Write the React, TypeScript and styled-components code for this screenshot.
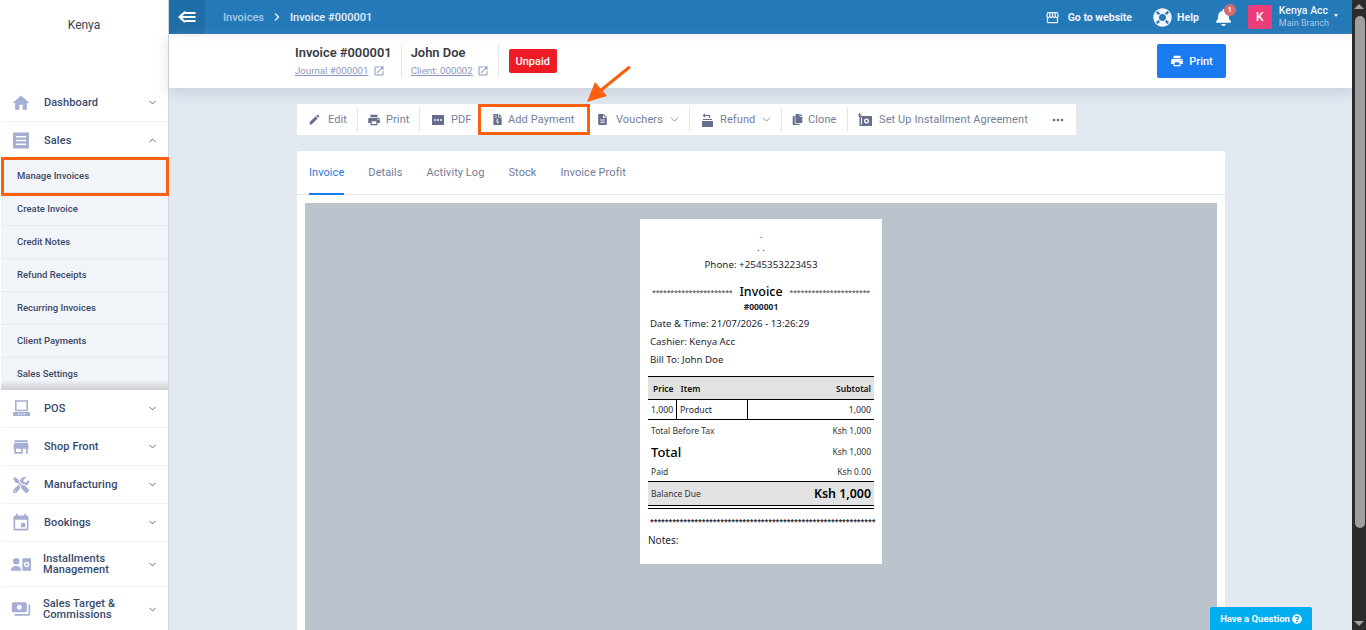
import React from "react";
import styled, { createGlobalStyle } from "styled-components";
import { ChevronDown, ChevronUp, ChevronRight } from "lucide-react";
import {
  MdHome, MdEdit, MdPrint, MdDescription, MdMoreHoriz, MdOpenInNew, MdStorefront, MdStore, MdEvent, MdPayments,
} from "react-icons/md";
import { FaLifeRing, FaQuestionCircle, FaCopy, FaFileInvoiceDollar, FaTools, FaBell } from "react-icons/fa";

const Global = createGlobalStyle`
  html, body { margin: 0; padding: 0; height: 630px; overflow: hidden; background: #e3e9f1; }
  * { box-sizing: border-box; }
  body { font-family: Roboto, "Liberation Sans", sans-serif; }
`;

const Page = styled.div`position: relative; display: flex; width: 1366px; height: 630px; overflow: hidden;`;
const Viewport = styled.div`display: flex; width: 1352px; height: 630px; overflow: hidden;`;
const ScrollTrack = styled.div`width: 14px; height: 630px; background: #2b2b2b; display: flex; flex-direction: column; align-items: center;`;
const ScrollUp = styled.div`width: 0; height: 0; margin-top: 4px; border-left: 5px solid transparent; border-right: 5px solid transparent; border-bottom: 5px solid #a3a3a3;`;
const ScrollThumb = styled.div`width: 10px; height: 512px; margin-top: 7px; margin-left: 2px; background: #9f9f9f; border-radius: 5px;`;
const ScrollDown = styled.div`width: 0; height: 0; margin-top: auto; margin-bottom: 4px; border-left: 5px solid transparent; border-right: 5px solid transparent; border-top: 5px solid #a3a3a3;`;

const Sidebar = styled.aside`width: 169px; flex: none; height: 630px; background: #fff; border-right: 1px solid #d3d5d8; padding-left: 1px; display: flex; flex-direction: column; overflow: hidden;`;
const Brand = styled.div`height: 84px; flex: none; padding-top: 17px; text-align: center; font-size: 12px; line-height: 16px; color: #3a4252; padding-right: 1px;`;
const NavItem = styled.div<{ $h?: number }>`
  height: ${p => p.$h ?? 38}px; flex: none; display: flex; align-items: center; padding: 0 10px 0 10px;
  border-bottom: 1px solid #f0f1f4; color: #374a6d; font-size: 11px; letter-spacing: .1px; font-weight: 500;
`;
const NavIcon = styled.span`width: 20px; height: 20px; flex: none; display: flex; align-items: center; justify-content: center; color: #a6aed4; margin-right: 13px;`;
const NavLabel = styled.span<{ $wide?: boolean }>`flex: 1; line-height: 11px; margin-left: ${p => p.$wide ? "-1px" : "0"};`;
const Chevron = styled.span`display: flex; color: #4f5f80;`;
const SubList = styled.div`height: 230px; flex: none; overflow: hidden; position: relative; background: #f1f4f9;
  &::after { content: ""; position: absolute; left: 0; right: 0; bottom: 0; height: 10px; background: linear-gradient(to bottom, rgba(190,192,196,0), rgba(190,192,196,.75)); }`;
const SubItem = styled.div`height: 33px; padding: 0 0 2px 16px; display: flex; align-items: center; border-bottom: 1px solid #e4e8ef; font-size: 9.5px; font-weight: 500; color: #3c4a66;`;

const Main = styled.main`flex: 1; min-width: 0; height: 630px; display: flex; flex-direction: column; background: #e3e9f1;`;
const TopBar = styled.header`height: 34px; flex: none; background: #2479b9; display: flex; align-items: center; color: #fff; padding-right: 14px;`;
const Toggle = styled.div`width: 36px; height: 34px; background: #206ea8; display: flex; align-items: center; justify-content: center;`;
const Crumb = styled.span<{ $strong?: boolean }>`font-size: 11px; font-weight: 500; color: ${p => p.$strong ? "#e9f0f7" : "#a9c9e3"};`;
const Crumbs = styled.div`display: flex; align-items: center; margin-left: 18px; gap: 7px;`;
const TopRight = styled.div`margin-left: auto; display: flex; align-items: center;`;
const TopLink = styled.span<{ $gap: number; $ml?: number }>`display: flex; align-items: center; gap: ${p => p.$gap}px; margin-left: ${p => p.$ml ?? 0}px; font-size: 10.5px; font-weight: 700; color: #eef4f9;`;
const Bell = styled.span`position: relative; display: flex; margin-left: 16px;`;
const BellBadge = styled.span`position: absolute; top: -5px; right: -4px; width: 12px; height: 12px; border-radius: 50%; background: #d46a72; color: #fff; font-size: 7px; font-weight: 700; display: flex; align-items: center; justify-content: center;`;
const Avatar = styled.span`width: 24px; height: 24px; margin-left: 16px; background: #ec3d7a; border-radius: 2px; display: flex; align-items: center; justify-content: center; color: #fff; font-size: 12px; font-weight: 500;`;
const UserBox = styled.div`margin-left: 7px; display: flex; flex-direction: column; gap: 2px;`;
const UserName = styled.span`font-size: 10.5px; line-height: 11px; font-weight: 500; color: #eef4f9;`;
const UserBranch = styled.span`font-size: 9px; line-height: 11px; color: #a9cbe6;`;
const Caret = styled.span`width: 0; height: 0; margin-left: 5px; margin-bottom: 3px; border-left: 2.5px solid transparent; border-right: 2.5px solid transparent; border-top: 3px solid #fff;`;

const PageHead = styled.div`height: 54px; flex: none; background: #fff; display: flex; align-items: center; padding: 0 126px 0 126px; box-shadow: 0 1px 2px #d4d8de, 0 5px 14px rgba(150,160,180,.35), inset 0 8px 8px -8px rgba(120,120,120,.18); position: relative; `;
const HeadBlock = styled.div<{ $first?: boolean }>`display: flex; flex-direction: column; justify-content: center; height: 34px; padding: 0 9px 1px ${p => p.$first ? 0 : 9}px; border-right: 1px solid #e6e8ec; gap: 5px;`;
const HeadTitle = styled.span`font-size: 12.9px; line-height: 15px; font-weight: 600; color: #373c44; white-space: nowrap;`;
const HeadLink = styled.span`display: flex; align-items: center; gap: 4px; font-size: 9.7px; line-height: 12px; color: #8d96bc; white-space: nowrap; u { text-underline-offset: 1px; }`;
const Unpaid = styled.span`margin-left: 10px; width: 48px; height: 24px; background: #ed1c24; border-radius: 2px; color: #fff; font-size: 11px; font-weight: 500; display: flex; align-items: center; justify-content: center;`;
const PrintButton = styled.button`margin-left: auto; width: 69px; height: 34px; border: 0; border-radius: 2px; background: #1a7aef; color: #fff; font: 500 11px Roboto, sans-serif; display: flex; align-items: center; justify-content: center; gap: 5px; padding: 0;`;

const Content = styled.div`flex: 1; min-height: 0; padding: 16px 0 0 128px; display: flex; flex-direction: column;`;
const Toolbar = styled.div`width: 779px; height: 31px; flex: none; background: #fff; display: flex; align-items: center;`;
const ToolBtn = styled.span<{ $w: number; $pl: number; $gap?: number; $line?: boolean }>`
  width: ${p => p.$w}px; flex: none; height: 25px; display: flex; align-items: center; padding-left: ${p => p.$pl}px; gap: ${p => p.$gap ?? 7}px;
  color: #747d99; font-size: 11px; letter-spacing: .1px; white-space: nowrap; border-right: ${p => p.$line ? "1px solid #e4e6eb" : "0"};
  svg { flex: none; }
`;
const ToolIcon = styled.span`display: flex; color: #666e8e;`;
const ToolChevron = styled.span`display: flex; color: #747d99; margin-left: -2px;`;

const Card = styled.section`width: 928px; margin-top: 16px; flex: 1; min-height: 0; background: #fff; border-radius: 2px 2px 0 0; display: flex; flex-direction: column;`;
const Tabs = styled.nav`height: 44px; flex: none; display: flex; gap: 24px; padding-left: 12px; border-bottom: 1px solid #e1e6ee;`;
const Tab = styled.span<{ $active?: boolean }>`height: 44px; display: flex; align-items: center; font-size: 11px; letter-spacing: .07px; color: ${p => p.$active ? "#1f7ae0" : "#727c98"}; border-bottom: 2px solid ${p => p.$active ? "#1a7aef" : "transparent"};`;
const Preview = styled.div`flex: 1; min-height: 0; margin: 8px 8px 0; background: #bbc3cd; padding-top: 16px; display: flex; justify-content: center; align-items: flex-start;`;

const Receipt = styled.article`width: 242px; height: 345px; background: #fff; padding: 12px 8px 0; font-family: "Noto Sans", sans-serif; font-size: 9.7px; color: #1f2430;`;
const Center = styled.div<{ $h: number }>`height: ${p => p.$h}px; line-height: ${p => p.$h}px; text-align: center; font-size: 9.8px;`;
const TitleRow = styled.div`height: 22px; margin-top: 7px; display: flex; align-items: center; justify-content: space-between; overflow: hidden; padding: 0 4px;`;
const Stars = styled.span`font-size: 7px; line-height: 8px; letter-spacing: -.2px; margin-top: 3px; color: #333; white-space: nowrap;`;
const TitleText = styled.span`font-size: 12.5px; font-weight: 500; color: #000;`;
const Num = styled.div`text-align: center; font-size: 8.5px; font-weight: 700; line-height: 11px; margin: -1px 0 3px;`;
const Meta = styled.div`height: 18px; line-height: 18px; padding-left: 2px;`;
const TableHead = styled.div`margin-top: 7px; height: 24px; border-top: 1px solid #000; border-bottom: 1px solid #000; background: #e2e2e2; display: flex; align-items: center; padding: 0 3px 0 5px; font-size: 8.5px; font-weight: 600; color: #111;`;
const THSpacer = styled.span`margin-left: 7px; flex: 1;`;
const TableRow = styled.div`height: 20px; display: grid; grid-template-columns: 29px 71px 1fr; border-bottom: 1px solid #000; font-size: 8.7px; line-height: 20px;`;
const Cell = styled.span<{ $right?: boolean; $line?: boolean }>`padding: 0 3px; text-align: ${p => p.$right ? "right" : "left"}; border-right: ${p => p.$line ? "1px solid #000" : "0"};`;
const Totals = styled.div<{ $h: number }>`height: ${p => p.$h}px; display: flex; align-items: center; justify-content: space-between; padding: 0 3px; font-size: 8.5px; color: #333;`;
const TotalLabel = styled.span`font-size: 13px; font-weight: 500; color: #000;`;
const Balance = styled.div`height: 25px; border-top: 1px solid #000; border-bottom: 1px solid #000; background: #e2e2e2; display: flex; align-items: center; justify-content: space-between; padding: 0 3px; font-size: 8.5px; color: #333;`;
const BalanceValue = styled.span`font-size: 12.4px; font-weight: 600; color: #000;`;
const DoubleLine = styled.div`height: 1px; margin-top: 2px; background: #000;`;
const StarLine = styled.div`margin: 8px 0 0 2px; height: 10px; line-height: 10px; font-size: 7px; white-space: nowrap; overflow: hidden; letter-spacing: -.1px; width: 226px; font-weight: 700;`;
const Notes = styled.div`margin-top: 7px; line-height: 13px; font-size: 10px;`;

const Mark = styled.div<{ $x: number; $y: number; $w: number; $h: number }>`position: absolute; left: ${p => p.$x}px; top: ${p => p.$y}px; width: ${p => p.$w}px; height: ${p => p.$h}px; border: 3px solid #f9600f; pointer-events: none;`;
const ArrowSvg = styled.svg`position: absolute; left: 580px; top: 60px; pointer-events: none;`;
const QuestionTab = styled.div`position: absolute; left: 1210px; bottom: 0; width: 102px; height: 23px; background: #00aeef; border-radius: 2px 2px 0 0; color: #fff; font-size: 9.5px; font-weight: 700; display: flex; align-items: center; justify-content: center; gap: 2px;`;

const Chev = () => <Chevron><ChevronDown size={11} strokeWidth={2} /></Chevron>;

const SalesIcon = () => (
  <svg width="16" height="17" viewBox="0 0 16 17"><path fill="#a6aed4" d="M0 .5h16v16H0z"/><path fill="#fff" d="M3 4h10v1.6H3zM3 7.7h10v1.6H3zM3 11.4h10V13H3z"/></svg>
);
const PosIcon = () => (
  <svg width="17" height="17" viewBox="0 0 17 17"><path fill="none" stroke="#a6aed4" strokeWidth="1.6" d="M2.8 1h11.4v9.5H2.8z"/><path fill="#a6aed4" d="M1 12h15a1 1 0 011 1v3H0v-3a1 1 0 011-1z"/><path fill="#fff" d="M5 13.6h1.6v1H5zM7.7 13.6h1.6v1H7.700zM10.400 13.600H12v1h-1.600z"/></svg>
);
const PeopleIcon = () => (
  <svg width="21" height="15" viewBox="0 0 21 15"><circle cx="5.5" cy="4" r="3.4" fill="#a6aed4"/><path fill="#a6aed4" d="M0 14c0-3.5 2.5-5 5.5-5s5 1.5 5 5z"/><path fill="#a6aed4" fillRule="evenodd" d="M12 1h9v13h-9zM16.5 4.6a2.800 2.800 0 100 5.600 2.800 2.800 0 000-5.600z"/><circle cx="16.500" cy="7.400" r="1.300" fill="#a6aed4"/></svg>
);
const MenuBack = () => (
  <svg width="18" height="12" viewBox="0 0 18 12"><path fill="#fff" d="M6.500 0 0 6l6.500 6 1.400-1.500L4.500 7.200 6 6 4.500 4.800 7.900 1.500z"/><path fill="#fff" d="M7 .9h10.500v2.200H7zM5 4.900h12.500v2.200H5zM7 8.900h10.500v2.200H7z"/></svg>
);
const PdfIcon = () => (
  <svg width="12" height="12" viewBox="0 0 12 12"><path fill="#666e8e" d="M0 1h12v10H0z"/><path fill="#c9cddd" d="M2 5h8v2H2z"/><path fill="#666e8e" d="M4 5h1v2H4zM7 5h1v2H7z"/></svg>
);
const RefundIcon = () => (
  <svg width="11" height="14" viewBox="0 0 11 14"><path fill="#666e8e" d="M0 8h11v6H0zM1 6h9v1H1z"/><path fill="none" stroke="#666e8e" strokeWidth="1.200" d="M3 1 1.500 2.500 3 4M1.500 2.500h6v2.500"/></svg>
);
const AgreementIcon = () => (
  <svg width="14" height="14" viewBox="0 0 14 14"><path fill="#666e8e" fillRule="evenodd" d="M1.500 3h12.500v10H1.500zM8.500 5.500a2.500 2.500 0 100 5 2.500 2.500 0 000-5z"/><circle cx="8.500" cy="8" r="1.200" fill="#666e8e"/><path fill="#fff" d="M3 4.500h1v7H3z"/><path fill="#666e8e" d="M1 0h1.200v1.400h1.400v1.200H2.200V4H1V2.600H0V1.400h1z"/></svg>
);
const Arrow = () => (
  <ArrowSvg width="54" height="46" viewBox="0 0 54 46">
    <path d="M49 7.500 20 31" stroke="#f9600f" strokeWidth="3" strokeLinecap="round" fill="none"/>
    <path d="M7 42 15 22 27 36z" fill="#f9600f"/>
  </ArrowSvg>
);

const subs = ["Manage Invoices", "Create Invoice", "Credit Notes", "Refund Receipts", "Recurring Invoices", "Client Payments", "Sales Settings"];

export default function App() {
  return (
    <Page>
      <Global />
      <Viewport>
        <Sidebar>
          <Brand>Kenya</Brand>
          <NavItem><NavIcon><MdHome size={20} /></NavIcon><NavLabel>Dashboard</NavLabel><Chev /></NavItem>
          <NavItem><NavIcon><SalesIcon /></NavIcon><NavLabel>Sales</NavLabel><Chevron><ChevronUp size={11} strokeWidth={2} /></Chevron></NavItem>
          <SubList>{subs.map(s => <SubItem key={s}>{s}</SubItem>)}</SubList>
          <NavItem><NavIcon><PosIcon /></NavIcon><NavLabel>POS</NavLabel><Chev /></NavItem>
          <NavItem><NavIcon><MdStore size={20} /></NavIcon><NavLabel>Shop Front</NavLabel><Chev /></NavItem>
          <NavItem><NavIcon><FaTools size={16} /></NavIcon><NavLabel>Manufacturing</NavLabel><Chev /></NavItem>
          <NavItem><NavIcon><MdEvent size={20} /></NavIcon><NavLabel>Bookings</NavLabel><Chev /></NavItem>
          <NavItem $h={45}><NavIcon><PeopleIcon /></NavIcon><NavLabel $wide>Installments<br />Management</NavLabel><Chev /></NavItem>
          <NavItem $h={45}><NavIcon><MdPayments size={20} /></NavIcon><NavLabel $wide>Sales Target &amp;<br />Commissions</NavLabel><Chev /></NavItem>
        </Sidebar>
        <Main>
          <TopBar>
            <Toggle><MenuBack /></Toggle>
            <Crumbs>
              <Crumb>Invoices</Crumb>
              <ChevronRight size={12} strokeWidth={3} color="#e4eef6" />
              <Crumb $strong>Invoice #000001</Crumb>
            </Crumbs>
            <TopRight>
              <TopLink $gap={8}><MdStorefront size={15} />Go to website</TopLink>
              <TopLink $gap={5} $ml={21}><FaLifeRing size={19} />Help</TopLink>
              <Bell><FaBell size={17} /><BellBadge>1</BellBadge></Bell>
              <Avatar>K</Avatar>
              <UserBox><UserName>Kenya Acc</UserName><UserBranch>Main Branch</UserBranch></UserBox>
              <Caret />
            </TopRight>
          </TopBar>
          <PageHead>
            <HeadBlock $first>
              <HeadTitle>Invoice #000001</HeadTitle>
              <HeadLink><u>Journal #000001</u><MdOpenInNew size={12} /></HeadLink>
            </HeadBlock>
            <HeadBlock>
              <HeadTitle>John Doe</HeadTitle>
              <HeadLink><u>Client: 000002</u><MdOpenInNew size={12} /></HeadLink>
            </HeadBlock>
            <Unpaid>Unpaid</Unpaid>
            <PrintButton><MdPrint size={14} />Print</PrintButton>
          </PageHead>
          <Content>
            <Toolbar>
              <ToolBtn $w={61} $pl={11} $line><ToolIcon><MdEdit size={13} /></ToolIcon>Edit</ToolBtn>
              <ToolBtn $w={62} $pl={9} $gap={5} $line><ToolIcon><MdPrint size={14} /></ToolIcon>Print</ToolBtn>
              <ToolBtn $w={60} $pl={12}><ToolIcon><PdfIcon /></ToolIcon>PDF</ToolBtn>
              <ToolBtn $w={110} $pl={12} $gap={5}><ToolIcon><FaFileInvoiceDollar size={11} /></ToolIcon>Add Payment</ToolBtn>
              <ToolBtn $w={100} $pl={6} $line><ToolIcon><MdDescription size={13} /></ToolIcon>Vouchers<ToolChevron><ChevronDown size={13} strokeWidth={1.5} /></ToolChevron></ToolBtn>
              <ToolBtn $w={92} $pl={12} $line><ToolIcon><RefundIcon /></ToolIcon>Refund<ToolChevron><ChevronDown size={13} strokeWidth={1.5} /></ToolChevron></ToolBtn>
              <ToolBtn $w={66} $pl={10} $gap={5} $line><ToolIcon><FaCopy size={11} /></ToolIcon>Clone</ToolBtn>
              <ToolBtn $w={202} $pl={10}><ToolIcon><AgreementIcon /></ToolIcon>Set Up Installment Agreement</ToolBtn>
              <ToolIcon><MdMoreHoriz size={16} /></ToolIcon>
            </Toolbar>
            <Card>
              <Tabs>
                <Tab $active>Invoice</Tab>
                <Tab>Details</Tab>
                <Tab>Activity Log</Tab>
                <Tab>Stock</Tab>
                <Tab>Invoice Profit</Tab>
              </Tabs>
              <Preview>
                <Receipt>
                  <Center $h={8}>.</Center>
                  <Center $h={18}>. .</Center>
                  <Center $h={16}>Phone: +2545353223453</Center>
                  <TitleRow>
                    <Stars>**********************</Stars>
                    <TitleText>Invoice</TitleText>
                    <Stars>**********************</Stars>
                  </TitleRow>
                  <Num>#000001</Num>
                  <Meta>Date &amp; Time: 21/07/2026 - 13:26:29</Meta>
                  <Meta>Cashier: Kenya Acc</Meta>
                  <Meta>Bill To: John Doe</Meta>
                  <TableHead>Price<THSpacer>Item</THSpacer>Subtotal</TableHead>
                  <TableRow><Cell $line>1,000</Cell><Cell $line>Product</Cell><Cell $right>1,000</Cell></TableRow>
                  <Totals $h={21}><span>Total Before Tax</span><span>Ksh 1,000</span></Totals>
                  <Totals $h={21}><TotalLabel>Total</TotalLabel><span>Ksh 1,000</span></Totals>
                  <Totals $h={19}><span>Paid</span><span>Ksh 0.00</span></Totals>
                  <Balance><span>Balance Due</span><BalanceValue>Ksh 1,000</BalanceValue></Balance>
                  <DoubleLine />
                  <StarLine>*************************************************************</StarLine>
                  <Notes>Notes:</Notes>
                </Receipt>
              </Preview>
            </Card>
          </Content>
        </Main>
      </Viewport>
      <ScrollTrack><ScrollUp /><ScrollThumb /><ScrollDown /></ScrollTrack>
      <Mark $x={1} $y={157} $w={168} $h={39} />
      <Mark $x={478} $y={104} $w={112} $h={31} />
      <Arrow />
      <QuestionTab>Have a Question <FaQuestionCircle size={10} /></QuestionTab>
    </Page>
  );
}
